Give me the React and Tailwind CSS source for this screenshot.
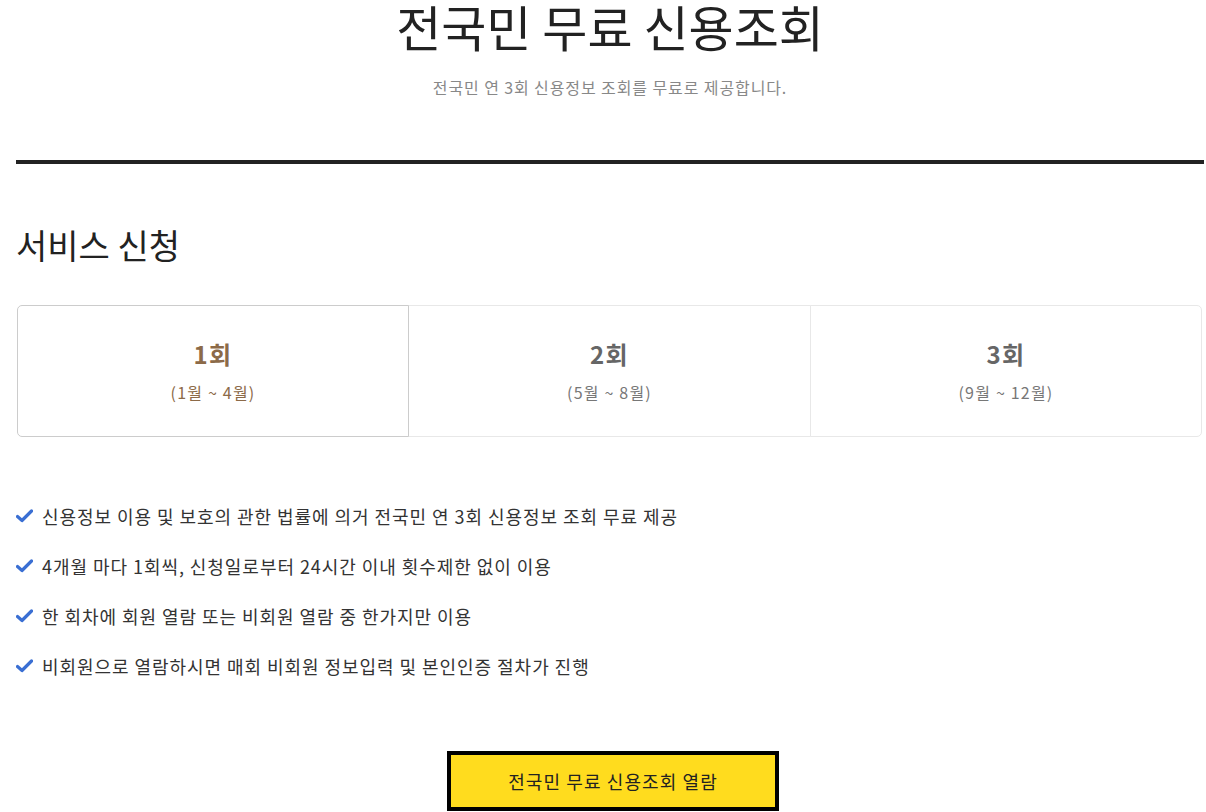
import React from "react";

const font = { fontFamily: '"Noto Sans CJK KR", "Noto Sans", sans-serif' };

function Check() {
  return (
    <svg width="17" height="14" viewBox="0 0 17 14" className="shrink-0">
      <path d="M1.5 7.5 L6 11.5 L15.5 2" fill="none" stroke="#3a6fd3" strokeWidth="3.2" strokeLinecap="round" strokeLinejoin="round" />
    </svg>
  );
}

const rounds = [
  { t: "1회", s: "(1월 ~ 4월)", active: true },
  { t: "2회", s: "(5월 ~ 8월)" },
  { t: "3회", s: "(9월 ~ 12월)" },
];

const items = [
  "신용정보 이용 및 보호의 관한 법률에 의거 전국민 연 3회 신용정보 조회 무료 제공",
  "4개월 마다 1회씩, 신청일로부터 24시간 이내 횟수제한 없이 이용",
  "한 회차에 회원 열람 또는 비회원 열람 중 한가지만 이용",
  "비회원으로 열람하시면 매회 비회원 정보입력 및 본인인증 절차가 진행",
];

export default function App() {
  return (
    <div style={font} className="w-[1206px] h-[812px] overflow-hidden bg-white">
      <div className="ml-4 mr-[2px] flex flex-col">
        <h1 className="pt-[2px] text-center text-[49px] leading-[48px] font-normal text-[#222]">전국민 무료 신용조회</h1>
        <p className="mt-[25px] text-center text-[16px] leading-[24px] tracking-[0.9px] text-[#888]">전국민 연 3회 신용정보 조회를 무료로 제공합니다.</p>
        <div className="mt-[61px] h-[4px] bg-[#222]" />
        <h2 className="mt-[61px] text-[34px] leading-[40px] font-normal text-[#222]">서비스 신청</h2>
        <div className="mt-[40px] ml-px mr-[2px] grid grid-cols-[392px_402px_1fr] h-[132px]">
          {rounds.map((r, i) => (
            <div
              key={i}
              className={
                "flex flex-col items-center justify-center gap-[11px] border bg-white " +
                (r.active ? "border-[#cccccc] rounded-l-[5px] relative z-10" : "border-[#e8e8e8] -ml-px") +
                (i === 2 ? " rounded-r-[5px]" : "")
              }
            >
              <div className={"text-[24px] leading-[30px] tracking-[1.5px] font-bold " + (r.active ? "text-[#8c6a48]" : "text-[#666]")}>{r.t}</div>
              <div className={"text-[16px] leading-[24px] tracking-[1.2px] " + (r.active ? "text-[#8c6a48]" : "text-[#777]")}>{r.s}</div>
            </div>
          ))}
        </div>
        <ul className="mt-[64px] flex flex-col gap-[20px]">
          {items.map((t, i) => (
            <li key={i} className="flex items-center gap-[9px] text-[18px] leading-[30px] tracking-[0.95px] text-[#333]">
              <Check />
              <span>{t}</span>
            </li>
          ))}
        </ul>
        <div className="mt-[70px] flex justify-center">
          <button className="ml-[6px] w-[332px] h-[60px] border-4 border-black bg-[#ffdc1e] text-[18px] tracking-[1.1px] text-[#222]">전국민 무료 신용조회 열람</button>
        </div>
      </div>
    </div>
  );
}
